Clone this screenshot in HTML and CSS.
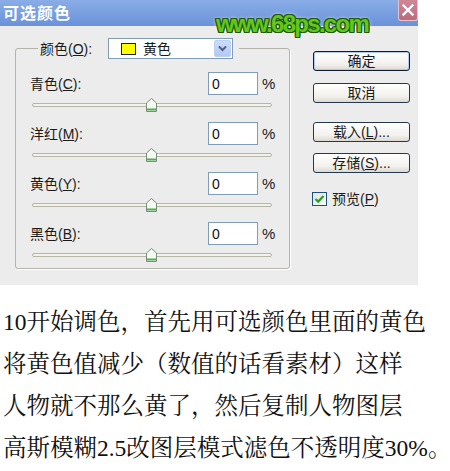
FILE: index.html
```html
<!DOCTYPE html>
<html lang="zh-CN">
<head>
<meta charset="utf-8">
<title>可选颜色</title>
<link rel="stylesheet" href="styles.css">
</head>
<body>
<div class="dialog">
  <div class="titlebar">
    <span class="title">可选颜色</span>
    <span class="close"><svg width="18" height="19" viewBox="0 0 18 19"><path d="M4.5 4.5 L13.5 13.5 M13.5 4.5 L4.5 13.5" stroke="#fff" stroke-width="2.4" stroke-linecap="square"/></svg></span>
  </div>
  <div class="watermark">www.68ps.com</div>
  <div class="content">
    <fieldset class="group">
      <legend class="legend">
        <span class="lbl lbl-legend">颜色(<u>O</u>):</span>
        <span class="select">
          <span class="swatch"></span>
          <span class="sel-text">黄色</span>
          <span class="arrow"><svg width="9" height="7" viewBox="0 0 9 7"><path d="M1 1.5 L4.5 5 L8 1.5" fill="none" stroke="#4d6185" stroke-width="2"/></svg></span>
        </span>
      </legend>
      <div class="row">
        <div class="row-head"><span class="lbl">青色(<u>C</u>):</span><input class="num" value="0"><span class="pct">%</span></div>
        <div class="slider"><div class="track"></div><svg class="thumb" width="11" height="14" viewBox="0 0 11 14"><path d="M5.5 0.5 L10.5 5 V13.5 H0.5 V5 Z" fill="#f4faf2" stroke="#7b8c7b"/><path d="M1 11.5 H10" stroke="#4fb04f" stroke-width="2"/></svg></div>
      </div>
      <div class="row">
        <div class="row-head"><span class="lbl">洋红(<u>M</u>):</span><input class="num" value="0"><span class="pct">%</span></div>
        <div class="slider"><div class="track"></div><svg class="thumb" width="11" height="14" viewBox="0 0 11 14"><path d="M5.5 0.5 L10.5 5 V13.5 H0.5 V5 Z" fill="#f4faf2" stroke="#7b8c7b"/><path d="M1 11.5 H10" stroke="#4fb04f" stroke-width="2"/></svg></div>
      </div>
      <div class="row">
        <div class="row-head"><span class="lbl">黄色(<u>Y</u>):</span><input class="num" value="0"><span class="pct">%</span></div>
        <div class="slider"><div class="track"></div><svg class="thumb" width="11" height="14" viewBox="0 0 11 14"><path d="M5.5 0.5 L10.5 5 V13.5 H0.5 V5 Z" fill="#f4faf2" stroke="#7b8c7b"/><path d="M1 11.5 H10" stroke="#4fb04f" stroke-width="2"/></svg></div>
      </div>
      <div class="row">
        <div class="row-head"><span class="lbl">黑色(<u>B</u>):</span><input class="num" value="0"><span class="pct">%</span></div>
        <div class="slider"><div class="track"></div><svg class="thumb" width="11" height="14" viewBox="0 0 11 14"><path d="M5.5 0.5 L10.5 5 V13.5 H0.5 V5 Z" fill="#f4faf2" stroke="#7b8c7b"/><path d="M1 11.5 H10" stroke="#4fb04f" stroke-width="2"/></svg></div>
      </div>
    </fieldset>
    <div class="buttons">
      <button class="btn btn-default">确定</button>
      <button class="btn btn-cancel">取消</button>
      <button class="btn btn-load">载入(<u>L</u>)...</button>
      <button class="btn btn-save">存储(<u>S</u>)...</button>
      <label class="check"><span class="box"><svg width="11" height="10" viewBox="0 0 11 10"><path d="M1.5 5 L4.2 7.6 L9.5 2" fill="none" stroke="#21a121" stroke-width="2.2"/></svg></span><span>预览(<u>P</u>)</span></label>
    </div>
  </div>
</div>
<p class="note">10开始调色，首先用可选颜色里面的黄色<br>将黄色值减少（数值的话看素材）这样<br>人物就不那么黄了，然后复制人物图层<br>高斯模糊2.5改图层模式滤色不透明度30%。</p>
</body>
</html>
```

FILE: styles.css
```css
* { box-sizing: border-box; }
body {
  margin: 0;
  background: #fff;
  font-family: "Liberation Sans", "Noto Sans CJK SC", sans-serif;
  color: #1a1a1a;
}
.dialog {
  position: relative;
  width: 418px;
  height: 285px;
  background: #ececec;
}
.titlebar {
  height: 26px;
  display: flex;
  justify-content: space-between;
  align-items: flex-start;
  background: linear-gradient(#8aade7, #6a92da);
}
.title {
  color: #fff;
  font: bold 16px/24px "Noto Sans CJK SC", sans-serif;
  letter-spacing: 1px;
  padding-left: 3px;
}
.close {
  width: 20px;
  height: 21px;
  display: flex;
  align-items: center;
  justify-content: center;
  background: linear-gradient(#d08896, #bb6c7d);
  border: 1px solid #e6c3cb;
  border-top: 0;
  border-radius: 0 0 3px 3px;
}
.watermark {
  position: absolute;
  left: 216px;
  top: 10px;
  font: bold 24px/28px "Liberation Sans", sans-serif;
  letter-spacing: -1.7px;
  color: #62c81c;
  text-shadow:
    1px 0 #21590a, -1px 0 #21590a, 0 1px #21590a, 0 -1px #21590a,
    1px 1px #21590a, -1px -1px #21590a, 1px -1px #21590a, -1px 1px #21590a,
    0 0 4px #fff;
}
.content {
  display: flex;
  align-items: flex-start;
  padding: 12px 0 0 15px;
}
.group {
  margin: 0;
  width: 275px;
  min-width: 0;
  padding: 13px 0 1px 14px;
  border: 1px solid #b4b4ac;
  border-radius: 3px;
  box-shadow: 1px 1px 0 #fff;
}
.legend {
  margin-left: 8px;
  padding: 0 6px 0 2px;
  display: flex;
  align-items: center;
}
.lbl {
  font-size: 14px;
  line-height: 18px;
  white-space: nowrap;
}
.lbl-legend { width: 68px; }
.select {
  width: 125px;
  height: 21px;
  display: flex;
  align-items: center;
  background: #fff;
  border: 1px solid #7f9db9;
}
.swatch {
  margin-left: 12px;
  width: 15px;
  height: 12px;
  border: 1px solid #222;
  background: #ffff00;
}
.sel-text {
  flex: 1;
  margin-left: 7px;
  font-size: 14px;
  line-height: 18px;
}
.arrow {
  width: 17px;
  height: 17px;
  margin-right: 1px;
  display: flex;
  align-items: center;
  justify-content: center;
  background: linear-gradient(#cddcfc, #b2c8f4);
  border: 1px solid #bccff5;
  border-radius: 2px;
}
.row + .row { margin-top: 5px; }
.row-head {
  display: grid;
  grid-template-columns: 178px 50px auto;
  align-items: center;
  height: 23px;
}
.num {
  width: 50px;
  height: 23px;
  margin: 0;
  padding: 0 0 0 3px;
  border: 1px solid #7f9db9;
  background: #fff;
  font: 14px "Liberation Sans", sans-serif;
  color: #111;
}
.pct {
  margin-left: 4px;
  font-size: 15px;
}
.slider {
  position: relative;
  height: 22px;
  padding: 8px 0 0 2px;
}
.track {
  width: 240px;
  height: 4px;
  border: 1px solid #b6b6a6;
  border-radius: 2px;
  background: #f2f2ec;
}
.thumb {
  position: absolute;
  left: 116px;
  top: 3px;
}
.buttons {
  display: flex;
  flex-direction: column;
  width: 97px;
  margin: 13px 0 0 23px;
}
.btn {
  height: 20px;
  padding: 0;
  border: 1px solid #24384f;
  border-radius: 3px;
  background: linear-gradient(#ffffff, #f1f0ec 70%, #dcd8cf);
  font: 14px/18px "Liberation Sans", "Noto Sans CJK SC", sans-serif;
  color: #1a1a1a;
}
.btn-default {
  border-color: #0e1d33;
  box-shadow: inset 0 0 0 1px #b4c9ef;
}
.btn-cancel { margin-top: 12px; }
.btn-load { margin-top: 19px; }
.btn-save { margin-top: 11px; }
.check {
  display: flex;
  align-items: center;
  margin: 18px 0 0 -1px;
  font-size: 14px;
  line-height: 16px;
}
.box {
  width: 15px;
  height: 14px;
  margin-right: 5px;
  display: flex;
  align-items: center;
  justify-content: center;
  border: 1px solid #1c5180;
  background: linear-gradient(135deg, #e2e2da, #fdfdfb);
}
.note {
  margin: 16px 0 0;
  padding-left: 3px;
  font-family: "Liberation Serif", "Noto Serif CJK SC", "Noto Sans CJK SC", serif;
  font-size: 23.5px;
  line-height: 42px;
  white-space: nowrap;
  color: #111;
}
```
